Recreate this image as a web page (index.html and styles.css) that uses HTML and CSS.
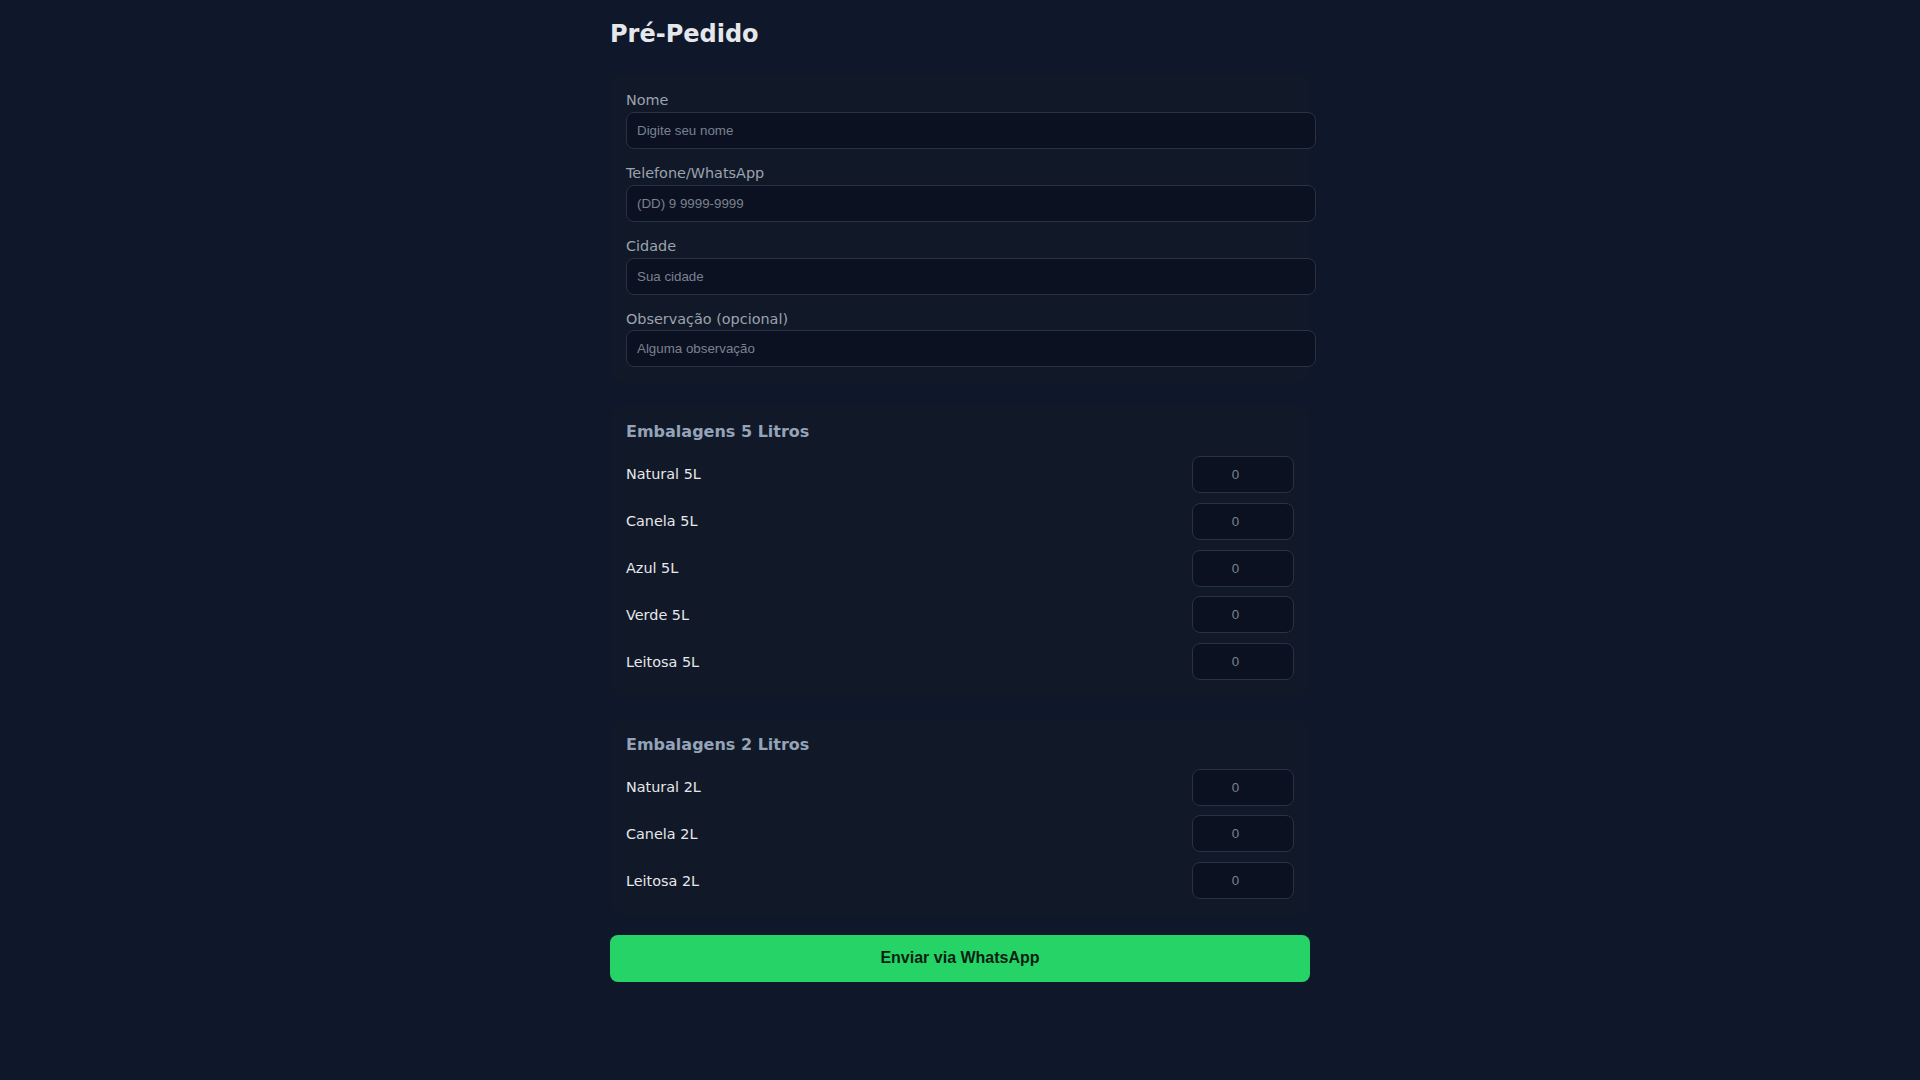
FILE: index.html
```html
<!DOCTYPE html>
<html lang="pt-BR">
<head>
<meta charset="utf-8">
<title>Pré-Pedido</title>
<link rel="stylesheet" href="styles.css">
</head>
<body>
<main class="wrap">
  <h1 class="title">Pré-Pedido</h1>

  <section class="card card--form">
    <div class="field">
      <label class="label">Nome</label>
      <input class="text-input" type="text" placeholder="Digite seu nome">
    </div>
    <div class="field">
      <label class="label">Telefone/WhatsApp</label>
      <input class="text-input" type="text" placeholder="(DD) 9 9999-9999">
    </div>
    <div class="field">
      <label class="label">Cidade</label>
      <input class="text-input" type="text" placeholder="Sua cidade">
    </div>
    <div class="field">
      <label class="label">Observação (opcional)</label>
      <input class="text-input" type="text" placeholder="Alguma observação">
    </div>
  </section>

  <section class="card">
    <h2 class="section-title">Embalagens 5 Litros</h2>
    <div class="rows">
      <div class="row"><span class="item">Natural 5L</span><input class="qty" type="number" placeholder="0"></div>
      <div class="row"><span class="item">Canela 5L</span><input class="qty" type="number" placeholder="0"></div>
      <div class="row"><span class="item">Azul 5L</span><input class="qty" type="number" placeholder="0"></div>
      <div class="row"><span class="item">Verde 5L</span><input class="qty" type="number" placeholder="0"></div>
      <div class="row"><span class="item">Leitosa 5L</span><input class="qty" type="number" placeholder="0"></div>
    </div>
  </section>

  <section class="card card--last">
    <h2 class="section-title">Embalagens 2 Litros</h2>
    <div class="rows">
      <div class="row"><span class="item">Natural 2L</span><input class="qty" type="number" placeholder="0"></div>
      <div class="row"><span class="item">Canela 2L</span><input class="qty" type="number" placeholder="0"></div>
      <div class="row"><span class="item">Leitosa 2L</span><input class="qty" type="number" placeholder="0"></div>
    </div>
  </section>

  <button class="send" type="button">Enviar via WhatsApp</button>
</main>
</body>
</html>
```

FILE: styles.css
```css
html, body {
  margin: 0;
  padding: 0;
  background: #0f172a;
  min-height: 100%;
}

body {
  font-family: "DejaVu Sans", sans-serif;
  color: #e5e7eb;
  padding-top: 20px;
}

.wrap {
  max-width: 700px;
  margin: 0 auto;
}

.title {
  font-size: 24px;
  line-height: 28px;
  font-weight: 700;
  color: #e5e7eb;
  margin: 0 0 26.2px;
}

.card {
  background: #111827;
  border-radius: 12px;
  padding: 16px;
  margin-bottom: 23px;
}

.card--form {
  margin-bottom: 23px;
}

.card--last {
  margin-bottom: 20px;
}

.field {
  margin-bottom: 14.3px;
}

.field:last-child {
  margin-bottom: 0;
}

.label {
  display: block;
  font-size: 14.4px;
  line-height: 21.6px;
  color: #9ca3af;
  margin-bottom: 0;
}

.text-input {
  display: block;
  box-sizing: content-box;
  width: 100%;
  padding: 10px;
  margin: 0;
  border: 1px solid #273244;
  border-radius: 8px;
  background: #0b1120;
  color: #e5e7eb;
  font-family: "Liberation Sans", Arial, sans-serif;
  font-size: 13.333px;
  outline: none;
}

.text-input::placeholder,
.qty::placeholder {
  color: #7a8190;
  opacity: 1;
}

.section-title {
  font-size: 16px;
  font-weight: 700;
  color: #94a3b8;
  margin: 0 0 14.5px;
}

.rows {
  display: flex;
  flex-direction: column;
  gap: 9.8px;
}

.row {
  display: flex;
  align-items: center;
  justify-content: space-between;
}

.item {
  font-size: 14.4px;
  color: #e5e7eb;
}

.qty {
  box-sizing: content-box;
  width: 80px;
  padding: 10px;
  margin: 0;
  border: 1px solid #273244;
  border-radius: 8px;
  background: #0b1120;
  color: #e5e7eb;
  font-family: "Liberation Sans", Arial, sans-serif;
  font-size: 13.333px;
  text-align: center;
  outline: none;
}

.send {
  display: block;
  width: 100%;
  padding: 14.2px 14px;
  border: none;
  border-radius: 8px;
  background: #25d366;
  color: #0a1f12;
  font-family: "Liberation Sans", Arial, sans-serif;
  font-size: 16px;
  font-weight: 700;
  cursor: pointer;
}
```
